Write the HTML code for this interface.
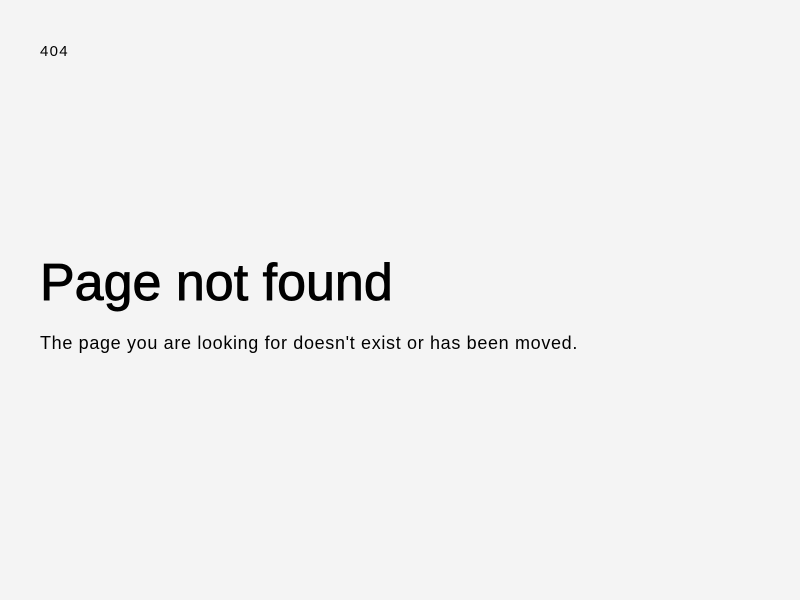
<!DOCTYPE html>
<html><head><style>
html,body{margin:0;padding:0;background:#f4f4f4;width:800px;height:600px;overflow:hidden;font-family:"Liberation Sans",sans-serif;color:#000;}
.c{position:absolute;left:40px;top:43px;font-size:15px;letter-spacing:1.3px;}
h1{position:absolute;left:40px;top:253px;margin:0;font-size:52px;font-weight:400;letter-spacing:0;line-height:60px;white-space:nowrap;-webkit-text-stroke:0.9px #000;}
p{position:absolute;left:40px;top:332px;margin:0;font-size:18px;line-height:22px;letter-spacing:0.66px;white-space:nowrap;}
</style></head><body>
<div class="c">404</div>
<h1>Page not found</h1>
<p>The page you are looking for doesn't exist or has been moved.</p>
</body></html>
